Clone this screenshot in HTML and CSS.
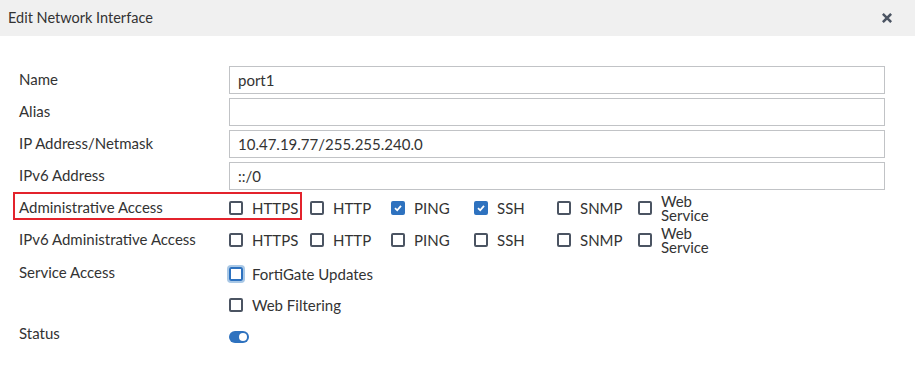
FILE: index.html
```html
<!DOCTYPE html>
<html>
<head>
<meta charset="utf-8">
<link rel="stylesheet" href="styles.css">
</head>
<body>
<div class="dialog">
  <div class="header">
    <span class="title">Edit Network Interface</span>
    <span class="close"><svg width="10" height="10" viewBox="0 0 10 10"><path d="M1.8 1.8 L8.2 8.2 M8.2 1.8 L1.8 8.2" stroke="#4b5462" stroke-width="2.6" stroke-linecap="square"/></svg></span>
  </div>
  <div class="form">
    <div class="row"><div class="label">Name</div><div class="field"><div class="input">port1</div></div></div>
    <div class="row"><div class="label">Alias</div><div class="field"><div class="input"></div></div></div>
    <div class="row"><div class="label">IP Address/Netmask</div><div class="field"><div class="input">10.47.19.77/255.255.240.0</div></div></div>
    <div class="row"><div class="label">IPv6 Address</div><div class="field"><div class="input">::/0</div></div></div>
    <div class="row">
      <div class="label"><span class="highlight">Administrative Access</span></div>
      <div class="field checks">
        <label class="opt"><span class="cb"></span><span>HTTPS</span></label>
        <label class="opt"><span class="cb"></span><span>HTTP</span></label>
        <label class="opt"><span class="cb checked"><svg width="10" height="10" viewBox="0 0 10 10"><path d="M2 5.2 L4.2 7.3 L8 2.8" fill="none" stroke="#fff" stroke-width="1.8"/></svg></span><span>PING</span></label>
        <label class="opt"><span class="cb checked"><svg width="10" height="10" viewBox="0 0 10 10"><path d="M2 5.2 L4.2 7.3 L8 2.8" fill="none" stroke="#fff" stroke-width="1.8"/></svg></span><span>SSH</span></label>
        <label class="opt"><span class="cb"></span><span>SNMP</span></label>
        <label class="opt"><span class="cb"></span><span class="two"><span class="ln">Web</span><span class="ln">Service</span></span></label>
      </div>
    </div>
    <div class="row">
      <div class="label">IPv6 Administrative Access</div>
      <div class="field checks">
        <label class="opt"><span class="cb"></span><span>HTTPS</span></label>
        <label class="opt"><span class="cb"></span><span>HTTP</span></label>
        <label class="opt"><span class="cb"></span><span>PING</span></label>
        <label class="opt"><span class="cb"></span><span>SSH</span></label>
        <label class="opt"><span class="cb"></span><span>SNMP</span></label>
        <label class="opt"><span class="cb"></span><span class="two"><span class="ln">Web</span><span class="ln">Service</span></span></label>
      </div>
    </div>
    <div class="row top">
      <div class="label sa">Service Access</div>
      <div class="field stack">
        <label class="opt line"><span class="cb focus"></span><span>FortiGate Updates</span></label>
        <label class="opt line"><span class="cb"></span><span>Web Filtering</span></label>
      </div>
    </div>
    <div class="row">
      <div class="label">Status</div>
      <div class="field"><span class="toggle"><span class="knob"></span></span></div>
    </div>
  </div>
</div>
</body>
</html>
```
FILE: styles.css
```css
html, body { margin: 0; padding: 0; background: #fff; }
body { font-family: Lato, "Open Sans", sans-serif; font-size: 15px; color: #333; }
.dialog { width: 915px; height: 365px; }
.header { height: 36px; background: #f0f0f0; display: flex; align-items: center; justify-content: space-between; padding: 0 23px 0 8px; }
.title { font-size: 14.5px; color: #333; line-height: 18px; margin-top: -1px; }
.close { display: flex; width: 10px; height: 10px; }
.form { padding: 30px 30px 0 19px; }
.row { display: flex; align-items: center; min-height: 28px; margin-bottom: 4px; }
.row.top { align-items: flex-start; margin-bottom: 0; }
.label { width: 210px; flex: none; position: relative; line-height: 18px; margin-top: -3px; }
.label.sa { line-height: 31px; margin-top: -1px; }
.highlight { position: relative; }
.highlight::before { content: ""; position: absolute; left: -6px; top: -6px; width: 285px; height: 24px; border: 2px solid #e3232c; }
.field { flex: 1; }
.input { height: 26px; border: 1px solid #c1c3c6; padding: 0 8px; line-height: 26px; color: #333; }
.checks { display: flex; align-items: center; }
.opt { display: flex; align-items: center; gap: 9px; }
.checks .opt:nth-child(1) { width: 81px; }
.checks .opt:nth-child(2) { width: 81px; }
.checks .opt:nth-child(3) { width: 83px; }
.checks .opt:nth-child(4) { width: 83px; }
.checks .opt:nth-child(5) { width: 81px; }
.cb { width: 10px; height: 10px; border: 2px solid #4b5462; border-radius: 2px; flex: none; display: flex; align-items: center; justify-content: center; }
.cb.checked { background: #2e72bf; border-color: #2e72bf; }
.cb.focus { border-color: #2e72bf; box-shadow: 0 0 0 2px #a9c8e6; }
.two { display: flex; flex-direction: column; margin: -1px 0; }
.ln { display: block; line-height: 14px; }
.stack { display: flex; flex-direction: column; }
.opt.line { height: 31px; }
.toggle { display: inline-block; position: relative; width: 20px; height: 12px; border-radius: 6px; background: #2e72bf; vertical-align: middle; }
.field .toggle { margin-top: 2px; }
.knob { position: absolute; right: 2px; top: 2px; width: 8px; height: 8px; border-radius: 50%; background: #fff; }
```
